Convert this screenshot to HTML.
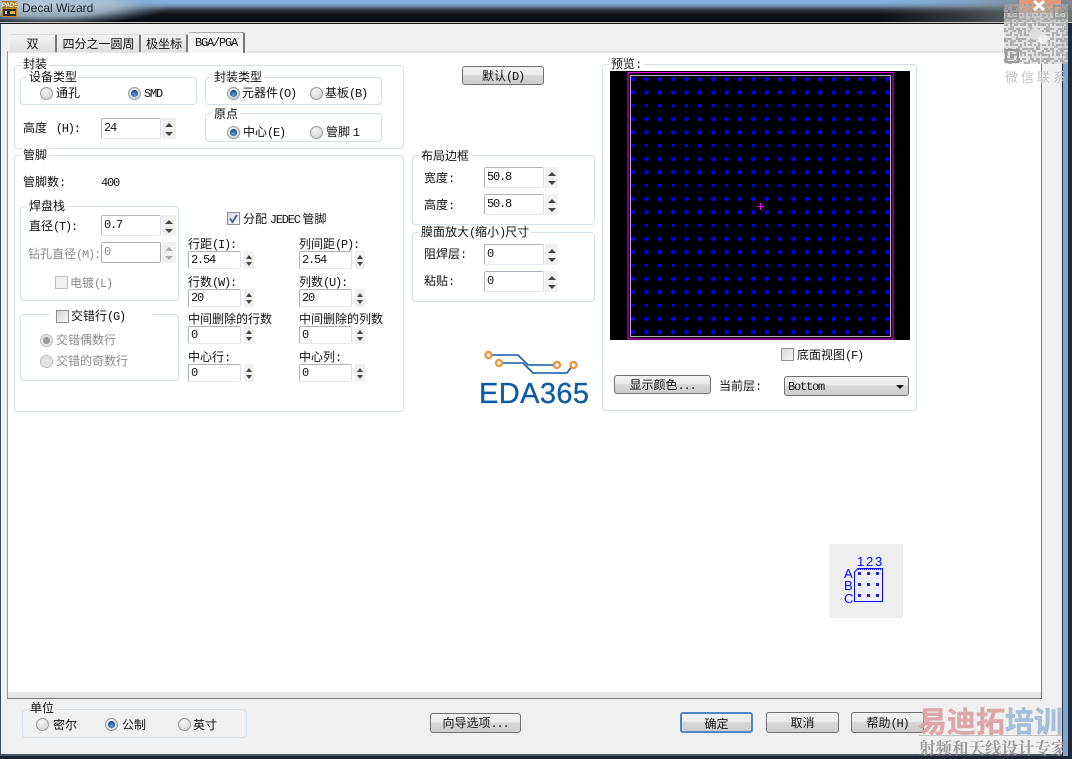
<!DOCTYPE html>
<html><head><meta charset="utf-8"><title>Decal Wizard</title>
<style>
html,body{margin:0;padding:0}
body{position:relative;width:1072px;height:756px;overflow:hidden;background:#1b2430;font:12px/14px "WenQuanYi Zen Hei","Noto Sans CJK SC",sans-serif;color:#111}
div,svg{position:absolute}
i{font:normal 12px/14px "Liberation Mono",monospace;letter-spacing:-1.2px}
.t{position:absolute;white-space:nowrap;line-height:14px;height:14px}
.l{background:#fff;padding:0 2px;margin-left:-2px}
.lg{background:#f0f0f0}
.d{color:#8b8b8b}.d i{color:#8b8b8b}
.g{border:1px solid #d6e0e6;border-radius:4px;box-sizing:border-box}
.e{border:1px solid #b0b4b8;border-bottom-color:#e3e9ef;border-right-color:#dbdfe6;border-radius:2px;box-sizing:border-box;background:#fff;padding:0 2px;font:normal 12px/16px "Liberation Mono",monospace;letter-spacing:-1.2px;white-space:nowrap}
.e.big{line-height:15px;padding-top:2px}
.e.dis{color:#8b8b8b;border-color:#aaa}
.s{background:#f0f0f0;box-sizing:border-box}
.s:before,.s:after{content:"";position:absolute;left:50%;margin-left:-4px;border-left:4px solid transparent;border-right:4px solid transparent}
.s:before{top:22%;border-bottom:4px solid #444}
.s:after{bottom:14%;border-top:4px solid #444}
.s.sm:before,.s.sm:after{margin-left:-3px;border-left-width:3px;border-right-width:3px}
.s.dis:before{border-bottom-color:#aaa}.s.dis:after{border-top-color:#aaa}
.r{width:13px;height:13px;border-radius:50%;box-sizing:border-box;border:1px solid #9a9a9a;background:radial-gradient(circle at 40% 35%,#f4f4f4,#cfcfcf)}
.r.on:after{content:"";position:absolute;left:2px;top:2px;width:7px;height:7px;border-radius:50%;background:radial-gradient(circle at 50% 65%,#5fa8e8,#123f80 75%)}
.r.dis{border-color:#bbb;background:#e4e4e4}
.r.dis.on:after{background:#9a9a9a}
.c{width:13px;height:13px;box-sizing:border-box;border:1px solid #8f8f8f;background:linear-gradient(135deg,#d8d8d8,#f6f6f6)}
.c.dis{border-color:#bbb;background:#f0f0f0}
.b{box-sizing:border-box;border:1px solid #707070;border-radius:3px;background:linear-gradient(#f3f3f3 0,#ebebeb 45%,#d8d8d8 50%,#cdcdcd 100%);text-align:center;line-height:17px;white-space:nowrap}
.tab{box-sizing:border-box;top:34px;height:18px;background:linear-gradient(#f2f2f2,#e0e0e0);border-right:2px solid #777;border-top:1px solid #ddd;text-align:center;line-height:17px;white-space:nowrap;border-radius:2px 2px 0 0}
</style></head><body>

<!-- title bar -->
<div style="left:0;top:0;width:1072px;height:23px;background:linear-gradient(#86b1e2 0,#82ade0 3px,#6d8cad 6px,#3d4a58 9px,#1a2028 12px,#0b1016 15px,#0a0e14 22px)"></div>
<div style="left:0;top:0;width:170px;height:23px;background:radial-gradient(ellipse 125px 19px at 45px 6px,rgba(185,203,216,.95) 0,rgba(170,192,210,.85) 55%,rgba(140,165,190,.35) 82%,rgba(130,160,190,0) 100%)"></div>
<div style="left:860px;top:0;width:212px;height:23px;background:linear-gradient(100deg,rgba(140,150,155,0) 10%,rgba(130,140,140,.35) 50%,rgba(125,130,130,.85) 85%)"></div>
<svg style="left:2px;top:1px" width="15" height="16" viewBox="0 0 15 16"><rect width="15" height="16" fill="#c98a1c"/><rect x="0" y="0" width="15" height="7" fill="#a5781e"/><rect x="1" y="8" width="13" height="7" fill="#2a2a22"/><rect x="3" y="10" width="2" height="3" fill="#ddd"/><rect x="8" y="10" width="5" height="3" fill="#e0b040"/><text x="0" y="6" font-family="Liberation Sans" font-size="6" font-weight="bold" fill="#fff">PADS</text></svg>
<div class="t" style="left:22px;top:1px;font:12px/14px 'Liberation Sans',sans-serif;color:#202428">Decal Wizard</div>
<div style="left:0;top:22px;width:1072px;height:1px;background:#c8c8c8"></div>
<div style="left:0;top:23px;width:1072px;height:1px;background:#141414"></div>

<!-- window body -->
<div style="left:0;top:24px;width:1062px;height:730px;background:#f0f0f0"></div>
<div style="left:0;top:24px;width:1px;height:730px;background:#3a4a5c"></div>
<div style="left:1062px;top:22px;width:1px;height:734px;background:#2a2f36"></div>
<div style="left:1063px;top:24px;width:5px;height:732px;background:#7fa6d2"></div>
<div style="left:1068px;top:24px;width:4px;height:732px;background:#1c2a3c"></div>
<div style="left:0;top:754px;width:1062px;height:2px;background:#46586c"></div>

<!-- pane -->
<div style="left:7px;top:51px;width:1035px;height:648px;box-sizing:border-box;background:#e6e6e6;border-right:1px solid #777;border-bottom:1px solid #777;border-left:1px solid #999"></div>
<div style="left:8px;top:53px;width:1033px;height:639px;background:#fff"></div>

<!-- tabs -->
<div class="tab" style="left:10px;width:47px">双</div>
<div class="tab" style="left:58px;width:83px">四分之一圆周</div>
<div class="tab" style="left:142px;width:46px">极坐标</div>
<div class="tab" style="left:189px;top:32px;height:21px;width:56px;background:#f4f4f4;border-top:1px solid #aaa;z-index:2"><i>BGA/PGA</i></div>

<!-- 封装 -->
<div class="g" style="left:14px;top:65px;width:390px;height:84px"></div>
<div class="t l" style="left:23px;top:57px">封装</div>
<div class="g" style="left:20px;top:77px;width:177px;height:28px"></div>
<div class="t l" style="left:29px;top:70px">设备类型</div>
<div class="r" style="left:40px;top:87px"></div><div class="t" style="left:56px;top:86px">通孔</div>
<div class="r on" style="left:128px;top:87px"></div><div class="t" style="left:144px;top:86px"><i>SMD</i></div>
<div class="g" style="left:205px;top:77px;width:177px;height:28px"></div>
<div class="t l" style="left:214px;top:70px">封装类型</div>
<div class="r on" style="left:227px;top:87px"></div><div class="t" style="left:242px;top:86px">元器件<i>(O)</i></div>
<div class="r" style="left:310px;top:87px"></div><div class="t" style="left:325px;top:86px">基板<i>(B)</i></div>
<div class="t" style="left:23px;top:121px">高度 <i>&nbsp;(H):</i></div>
<div class="e big" style="left:101px;top:118px;width:60px;height:21px">24</div>
<div class="s" style="left:162px;top:118px;width:14px;height:21px"></div>
<div class="g" style="left:205px;top:113px;width:177px;height:29px"></div>
<div class="t l" style="left:214px;top:107px">原点</div>
<div class="r on" style="left:227px;top:126px"></div><div class="t" style="left:243px;top:125px">中心<i>(E)</i></div>
<div class="r" style="left:310px;top:126px"></div><div class="t" style="left:326px;top:125px">管脚 <i>1</i></div>

<!-- 管脚 -->
<div class="g" style="left:14px;top:155px;width:390px;height:257px"></div>
<div class="t l" style="left:23px;top:148px">管脚</div>
<div class="t" style="left:23px;top:175px">管脚数<i>:</i></div>
<div class="t" style="left:101px;top:175px"><i>400</i></div>

<div class="g" style="left:20px;top:206px;width:159px;height:95px"></div>
<div class="t l" style="left:29px;top:199px">焊盘栈</div>
<div class="t" style="left:29px;top:219px">直径<i>(T):</i></div>
<div class="e big" style="left:101px;top:215px;width:60px;height:21px">0.7</div>
<div class="s" style="left:162px;top:215px;width:14px;height:21px"></div>
<div class="t d" style="left:28px;top:247px">钻孔直径<i>(M):</i></div>
<div class="e big dis" style="left:101px;top:242px;width:60px;height:21px">0</div>
<div class="s dis" style="left:162px;top:242px;width:14px;height:21px"></div>
<div class="c dis" style="left:55px;top:276px"></div>
<div class="t d" style="left:70px;top:276px">电镀<i>(L)</i></div>

<div class="g" style="left:20px;top:314px;width:159px;height:67px"></div>
<div style="left:49px;top:312px;width:104px;height:4px;background:#fff"></div>
<div class="c" style="left:56px;top:310px"></div>
<div class="t" style="left:71px;top:309px">交错行<i>(G)</i></div>
<div class="r dis on" style="left:40px;top:334px"></div><div class="t d" style="left:56px;top:333px">交错偶数行</div>
<div class="r dis" style="left:40px;top:355px"></div><div class="t d" style="left:56px;top:354px">交错的奇数行</div>

<div class="c" style="left:227px;top:212px"></div>
<svg style="left:227px;top:212px" width="13" height="13" viewBox="0 0 13 13"><path d="M3 6.5 L5.5 10 L10 3" fill="none" stroke="#3a5f95" stroke-width="1.8"/></svg>
<div class="t" style="left:243px;top:212px">分配 <i>JEDEC</i> 管脚</div>

<div class="t" style="left:188px;top:237px">行距<i>(I):</i></div>
<div class="e" style="left:188px;top:251px;width:53px;height:18px">2.54</div>
<div class="s sm" style="left:244px;top:251px;width:10px;height:18px"></div>
<div class="t" style="left:299px;top:237px">列间距<i>(P):</i></div>
<div class="e" style="left:299px;top:251px;width:53px;height:18px">2.54</div>
<div class="s sm" style="left:355px;top:251px;width:10px;height:18px"></div>

<div class="t" style="left:188px;top:275px">行数<i>(W):</i></div>
<div class="e" style="left:188px;top:289px;width:53px;height:18px">20</div>
<div class="s sm" style="left:244px;top:289px;width:10px;height:18px"></div>
<div class="t" style="left:299px;top:275px">列数<i>(U):</i></div>
<div class="e" style="left:299px;top:289px;width:53px;height:18px">20</div>
<div class="s sm" style="left:355px;top:289px;width:10px;height:18px"></div>

<div class="t" style="left:188px;top:312px">中间删除的行数</div>
<div class="e" style="left:188px;top:326px;width:53px;height:18px">0</div>
<div class="s sm" style="left:244px;top:326px;width:10px;height:18px"></div>
<div class="t" style="left:299px;top:312px">中间删除的列数</div>
<div class="e" style="left:299px;top:326px;width:53px;height:18px">0</div>
<div class="s sm" style="left:355px;top:326px;width:10px;height:18px"></div>

<div class="t" style="left:188px;top:350px">中心行<i>:</i></div>
<div class="e" style="left:188px;top:364px;width:53px;height:18px">0</div>
<div class="s sm" style="left:244px;top:364px;width:10px;height:18px"></div>
<div class="t" style="left:299px;top:350px">中心列<i>:</i></div>
<div class="e" style="left:299px;top:364px;width:53px;height:18px">0</div>
<div class="s sm" style="left:355px;top:364px;width:10px;height:18px"></div>

<!-- middle -->
<div class="b" style="left:462px;top:66px;width:82px;height:19px">默认<i>(D)</i></div>
<div class="g" style="left:412px;top:155px;width:183px;height:70px"></div>
<div class="t l" style="left:421px;top:149px">布局边框</div>
<div class="t" style="left:424px;top:171px">宽度<i>:</i></div>
<div class="e big" style="left:484px;top:167px;width:60px;height:21px">50.8</div>
<div class="s" style="left:545px;top:167px;width:13px;height:21px"></div>
<div class="t" style="left:424px;top:198px">高度<i>:</i></div>
<div class="e big" style="left:484px;top:194px;width:60px;height:21px">50.8</div>
<div class="s" style="left:545px;top:194px;width:13px;height:21px"></div>
<div class="g" style="left:412px;top:232px;width:183px;height:70px"></div>
<div class="t l" style="left:421px;top:225px">膜面放大<i>(</i>缩小<i>)</i>尺寸</div>
<div class="t" style="left:424px;top:247px">阻焊层<i>:</i></div>
<div class="e big" style="left:484px;top:244px;width:60px;height:21px">0</div>
<div class="s" style="left:545px;top:244px;width:13px;height:21px"></div>
<div class="t" style="left:424px;top:274px">粘贴<i>:</i></div>
<div class="e big" style="left:484px;top:271px;width:60px;height:21px">0</div>
<div class="s" style="left:545px;top:271px;width:13px;height:21px"></div>

<!-- logo -->
<svg style="left:480px;top:345px" width="100" height="32" viewBox="480 345 100 32">
<path d="M488 355H518L528 365H557M499 363H523L533 373H567L573 365" fill="none" stroke="#0f5aa5" stroke-width="1.6"/>
<g fill="#fff" stroke="#e59a45" stroke-width="2.4"><circle cx="488.500" cy="355" r="3"/><circle cx="499" cy="363" r="3"/><circle cx="557" cy="365" r="3"/><circle cx="573.500" cy="365" r="3"/></g>
</svg>
<div class="t" style="left:479px;top:378px;height:32px;font:29px/32px 'Liberation Sans',sans-serif;letter-spacing:.4px;color:#0f5aa5;-webkit-text-stroke:.3px #0f5aa5">EDA365</div>

<!-- preview -->
<div class="g" style="left:602px;top:64px;width:315px;height:347px"></div>
<div class="t l" style="left:611px;top:57px">预览<i>:</i></div>
<svg style="left:610px;top:71px" width="300" height="269" viewBox="610 71 300 269">
<defs><pattern id="pad" patternUnits="userSpaceOnUse" x="626.3" y="72.300" width="13.37" height="39.96">
<circle cx="6.680" cy="6.700" r="2.200" fill="#0000ff"/><circle cx="6.680" cy="20" r="2.200" fill="#0000ff"/><circle cx="6.680" cy="33.300" r="1.700" fill="#0000ff"/>
</pattern></defs>
<rect x="610" y="71" width="300" height="269" fill="#000"/>
<rect x="631" y="76" width="259" height="259" fill="url(#pad)"/>
<rect x="628" y="72.500" width="265" height="266.500" fill="none" stroke="#ff00ff" stroke-width="1"/>
<rect x="630.500" y="75.500" width="260" height="261" fill="none" stroke="#b4b4b4" stroke-width="1"/>
<path d="M757 206.500H764M760.500 203V210" stroke="#ff00ff" stroke-width="1"/>
</svg>
<div class="c" style="left:781px;top:348px"></div>
<div class="t" style="left:797px;top:348px">底面视图<i>(F)</i></div>
<div class="b" style="left:614px;top:375px;width:97px;height:19px">显示颜色<i>...</i></div>
<div class="t" style="left:719px;top:379px">当前层<i>:</i></div>
<div class="b" style="left:784px;top:376px;width:125px;height:20px;text-align:left;padding-left:3px;line-height:18px"><i>Bottom</i></div>
<div style="left:896px;top:385px;width:0;height:0;border-left:4px solid transparent;border-right:4px solid transparent;border-top:4px solid #111"></div>

<!-- legend icon -->
<svg style="left:829px;top:544px" width="74" height="74" viewBox="829 544 74 74">
<rect x="829" y="544" width="74" height="74" fill="#eeeeee"/>
<path d="M858 568.500H882.500V601.500H854.500V572Z" fill="#eef0ff" stroke="#0000ff" stroke-width="1"/>
<path d="M858 569.500H882.500" stroke="#0000ff" stroke-width="1" stroke-dasharray="1 1"/>
<g fill="#2222cc"><rect x="858" y="572" width="3" height="3"/><rect x="867" y="572" width="3" height="3"/><rect x="876" y="572" width="3" height="3"/><rect x="858" y="583" width="3" height="3"/><rect x="867" y="583" width="3" height="3"/><rect x="876" y="583" width="3" height="3"/><rect x="858" y="594" width="3" height="3"/><rect x="867" y="594" width="3" height="3"/><rect x="876" y="594" width="3" height="3"/></g>
<g font-family="Liberation Sans" font-size="13" fill="#0000ff"><text x="857" y="566">1</text><text x="866" y="566">2</text><text x="875" y="566">3</text><text x="844" y="578">A</text><text x="844" y="590">B</text><text x="844" y="603">C</text></g>
</svg>

<!-- bottom -->
<div class="g" style="left:22px;top:709px;width:225px;height:29px"></div>
<div class="t lg" style="left:30px;top:701px;padding:0 1px;margin-left:-1px">单位</div>
<div class="r" style="left:36px;top:718px"></div><div class="t" style="left:53px;top:718px">密尔</div>
<div class="r on" style="left:105px;top:718px"></div><div class="t" style="left:122px;top:718px">公制</div>
<div class="r" style="left:178px;top:718px"></div><div class="t" style="left:193px;top:718px">英寸</div>
<div class="b" style="left:430px;top:713px;width:91px;height:20px;line-height:18px">向导选项<i>...</i></div>
<div class="b" style="left:680px;top:712px;width:73px;height:21px;line-height:19px;border:2px solid #4a88c8">确定</div>
<div class="b" style="left:766px;top:712px;width:73px;height:21px;line-height:19px">取消</div>
<div class="b" style="left:851px;top:712px;width:73px;height:21px;line-height:19px">帮助<i>(H)</i></div>

<!-- QR watermark -->
<svg style="left:1004px;top:0" width="68" height="68" viewBox="0 0 68 68">
<defs>
<pattern id="q1" patternUnits="userSpaceOnUse" width="14" height="10"><path d="M0 0h4v2H0zM6 2h2v4H6zM10 0h2v2h-2zM2 4h2v2H2zM10 4h4v2h-4zM0 8h2v2H0zM4 8h4v2H4zM12 8h2v2h-2z" fill="#a0a0a0"/></pattern>
<pattern id="q2" patternUnits="userSpaceOnUse" width="18" height="14"><path d="M2 2h2v2H2zM8 0h2v4H8zM14 4h4v2h-4zM4 6h4v2H4zM12 8h2v4h-2zM0 10h4v2H0zM6 12h4v2H6zM16 10h2v2h-2z" fill="#acacac"/></pattern>
</defs>
<path d="M15 0H57V13H15Z" fill="#e09a78"/>
<rect x="0" y="13" width="64" height="51" fill="#f4f4f4" opacity=".72"/>
<rect x="0" y="4" width="64" height="60" fill="#bbb" opacity=".3"/>
<rect x="0" y="4" width="64" height="60" fill="url(#q1)" opacity=".8"/>
<rect x="0" y="4" width="64" height="60" fill="url(#q2)" opacity=".8"/>
<g fill="none" stroke="#9a9a9a" stroke-width="2"><rect x="2" y="6" width="12" height="12"/><rect x="50" y="6" width="12" height="12"/><rect x="2" y="50" width="12" height="12"/></g>
<g fill="#999"><rect x="6" y="10" width="4" height="4"/><rect x="54" y="10" width="4" height="4"/><rect x="6" y="54" width="4" height="4"/></g>
<circle cx="31" cy="34" r="6" fill="#ddd"/><circle cx="39" cy="39" r="5" fill="#eee"/>
<path d="M30 1L40 10M40 1L30 10" stroke="#fff" stroke-width="3"/>
</svg>
<div class="t" style="left:1005px;top:70px;color:#c4c4c4;font-size:13px;letter-spacing:3px">微信联系</div>

<!-- watermark bottom right -->
<div class="t" style="left:918px;top:703px;height:34px;font:bold 29px/34px 'Noto Sans CJK SC',sans-serif;white-space:nowrap;opacity:.9;-webkit-text-stroke:.5px"><span style="color:#dba0a0">易迪拓</span><span style="color:#9dbad8">培训</span></div>
<div style="left:919px;top:735px;width:143px;height:1px;background:#c4c4c4"></div>
<div class="t" style="left:919px;top:738px;height:18px;font:bold 16.5px/18px 'Noto Serif CJK SC',serif;color:#9a9a9a;white-space:nowrap">射频和天线设计专家</div>

</body></html>
